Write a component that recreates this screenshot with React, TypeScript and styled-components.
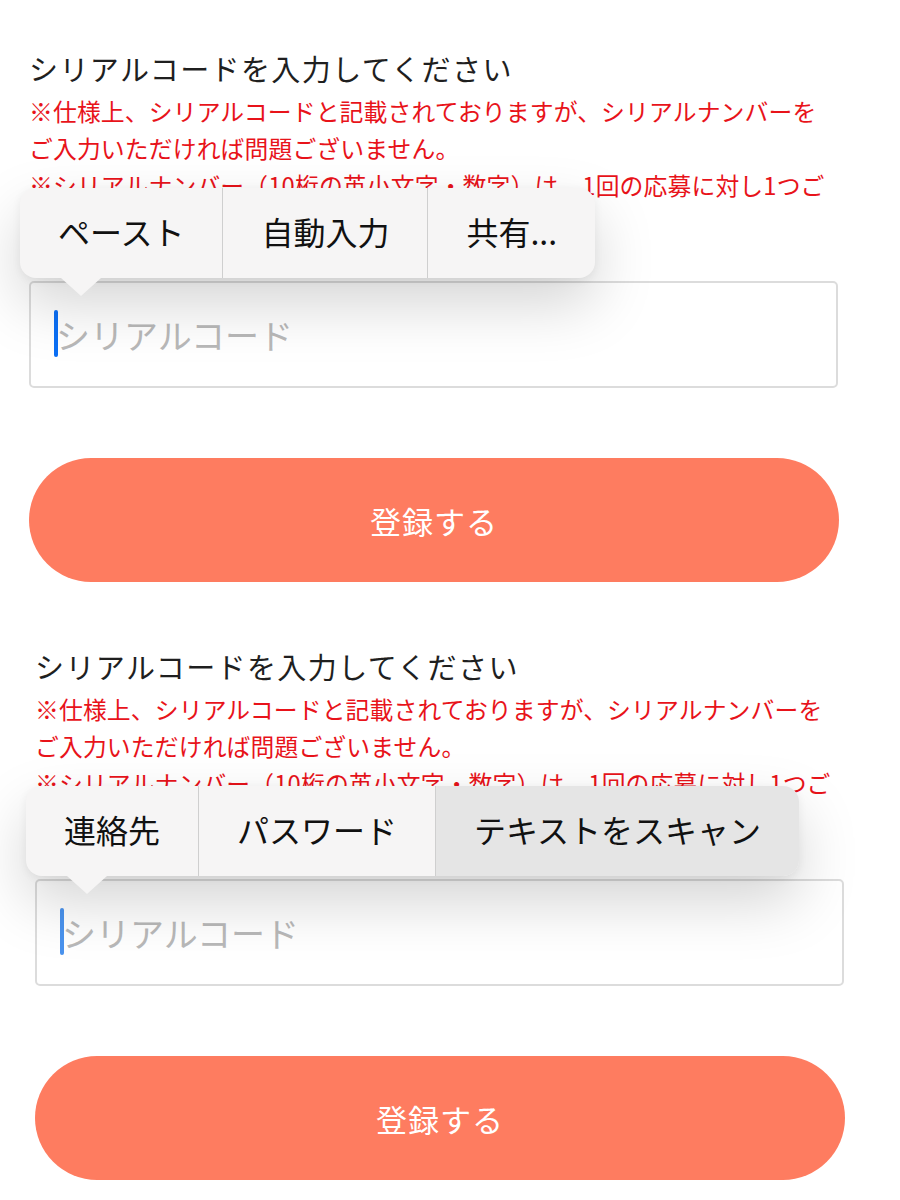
import React from 'react';
import styled, { createGlobalStyle } from 'styled-components';

const GlobalStyle = createGlobalStyle`
  html, body {
    margin: 0;
    padding: 0;
    background: #fff;
  }
  body {
    font-family: "Noto Sans CJK JP", "Noto Sans", sans-serif;
    color: #1f1f1f;
  }
  * { box-sizing: border-box; }
`;

type MenuItem = { label: string; active?: boolean };

type FormProps = {
  shift: number;
  menu: MenuItem[];
  caret: string;
};

function SerialForm({ shift, menu, caret }: FormProps) {
  return (
    <Panel $shift={shift}>
      <Title>シリアルコードを入力してください</Title>
      <Notes>
        <p>
          ※仕様上、シリアルコードと記載されておりますが、シリアルナンバーを<br />
          ご入力いただければ問題ございません。
        </p>
        <p>
          ※シリアルナンバー（10桁の英小文字・数字）は、1回の応募に対し1つご<br />
          入力ください。
        </p>
      </Notes>
      <Field>
        <Menu>
          {menu.map((item) => (
            <MenuButton key={item.label} $active={!!item.active}>
              {item.label}
            </MenuButton>
          ))}
        </Menu>
        <InputBox>
          <Caret $color={caret} />
          <TextInput type="text" placeholder="シリアルコード" />
        </InputBox>
      </Field>
      <Submit type="button">登録する</Submit>
    </Panel>
  );
}

export default function App() {
  return (
    <>
      <GlobalStyle />
      <Page>
        <SerialForm
          shift={0}
          caret="#0b6ff5"
          menu={[{ label: 'ペースト' }, { label: '自動入力' }, { label: '共有...' }]}
        />
        <SerialForm
          shift={6}
          caret="#4a93ee"
          menu={[
            { label: '連絡先' },
            { label: 'パスワード' },
            { label: 'テキストをスキャン', active: true },
          ]}
        />
      </Page>
    </>
  );
}

const Page = styled.main`
  width: 900px;
  overflow: hidden;
`;

const Panel = styled.section<{ $shift: number }>`
  height: 598px;
  padding: 48px 0 0 ${(p) => 29 + p.$shift}px;
  display: flex;
  flex-direction: column;
`;

const Title = styled.h2`
  margin: 0;
  font-size: 29px;
  line-height: 40px;
  font-weight: 400;
  letter-spacing: 1.4px;
  color: #1f1f1f;
`;

const Notes = styled.div`
  margin-top: 4px;
  color: #e8131a;
  font-size: 23.8px;
  line-height: 37px;
  letter-spacing: 0.15px;
  white-space: nowrap;

  p {
    margin: 0;
  }
`;

const Field = styled.div`
  position: relative;
  margin-top: 41px;
  width: 809px;
`;

const Menu = styled.div`
  position: absolute;
  left: -9px;
  bottom: calc(100% + 3px);
  z-index: 2;
  display: flex;
  height: 90px;
  background: #f6f5f5;
  border-radius: 16px;
  box-shadow: 0 26px 60px rgba(0, 0, 0, 0.17), 0 2px 10px rgba(0, 0, 0, 0.06);

  &::after {
    content: '';
    position: absolute;
    left: 41px;
    top: 100%;
    border-top: 18px solid #f6f5f5;
    border-left: 20px solid transparent;
    border-right: 20px solid transparent;
  }
`;

const MenuButton = styled.div<{ $active: boolean }>`
  display: flex;
  align-items: center;
  padding: 0 38px 4px;
  font-size: 32px;
  color: #111;
  white-space: nowrap;
  background: ${(p) => (p.$active ? '#e5e5e5' : 'transparent')};

  & + & {
    border-left: 1px solid #cfcfcf;
  }
  &:first-child {
    border-radius: 16px 0 0 16px;
  }
  &:last-child {
    border-radius: 0 16px 16px 0;
  }
`;

const InputBox = styled.div`
  position: relative;
  display: flex;
  align-items: center;
  height: 107px;
  padding-left: 25px;
  border: 2px solid #dcdcdc;
  border-radius: 5px;
  background: #fff;
`;

const Caret = styled.span<{ $color: string }>`
  position: absolute;
  left: 23px;
  top: 27px;
  width: 4px;
  height: 47px;
  border-radius: 2px;
  background: ${(p) => p.$color};
`;

const TextInput = styled.input`
  flex: 1;
  border: 0;
  outline: none;
  background: transparent;
  padding: 0;
  font-family: inherit;
  font-size: 34px;
  color: #222;

  &::placeholder {
    color: #b9b9b9;
  }
`;

const Submit = styled.button`
  margin-top: 70px;
  width: 810px;
  height: 124px;
  border: 0;
  border-radius: 62px;
  background: #fe7c60;
  color: #fff;
  font-family: inherit;
  font-size: 31px;
  letter-spacing: 1px;
  cursor: pointer;
`;
